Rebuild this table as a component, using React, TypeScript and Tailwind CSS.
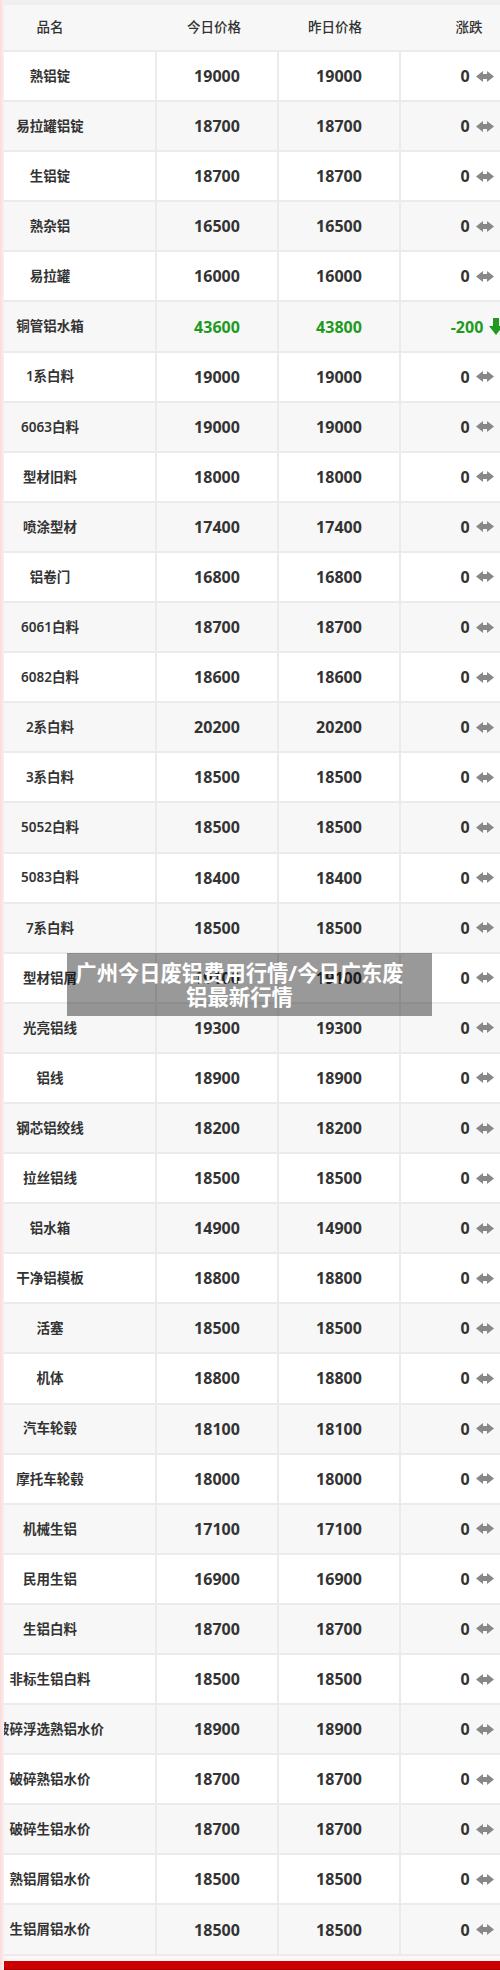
import React from "react";

type Row = { name: string; today: number; yesterday: number };

const rows: Row[] = [
  { name: "熟铝锭", today: 19000, yesterday: 19000 },
  { name: "易拉罐铝锭", today: 18700, yesterday: 18700 },
  { name: "生铝锭", today: 18700, yesterday: 18700 },
  { name: "熟杂铝", today: 16500, yesterday: 16500 },
  { name: "易拉罐", today: 16000, yesterday: 16000 },
  { name: "铜管铝水箱", today: 43600, yesterday: 43800 },
  { name: "1系白料", today: 19000, yesterday: 19000 },
  { name: "6063白料", today: 19000, yesterday: 19000 },
  { name: "型材旧料", today: 18000, yesterday: 18000 },
  { name: "喷涂型材", today: 17400, yesterday: 17400 },
  { name: "铝卷门", today: 16800, yesterday: 16800 },
  { name: "6061白料", today: 18700, yesterday: 18700 },
  { name: "6082白料", today: 18600, yesterday: 18600 },
  { name: "2系白料", today: 20200, yesterday: 20200 },
  { name: "3系白料", today: 18500, yesterday: 18500 },
  { name: "5052白料", today: 18500, yesterday: 18500 },
  { name: "5083白料", today: 18400, yesterday: 18400 },
  { name: "7系白料", today: 18500, yesterday: 18500 },
  { name: "型材铝屑", today: 19100, yesterday: 19100 },
  { name: "光亮铝线", today: 19300, yesterday: 19300 },
  { name: "铝线", today: 18900, yesterday: 18900 },
  { name: "钢芯铝绞线", today: 18200, yesterday: 18200 },
  { name: "拉丝铝线", today: 18500, yesterday: 18500 },
  { name: "铝水箱", today: 14900, yesterday: 14900 },
  { name: "干净铝模板", today: 18800, yesterday: 18800 },
  { name: "活塞", today: 18500, yesterday: 18500 },
  { name: "机体", today: 18800, yesterday: 18800 },
  { name: "汽车轮毂", today: 18100, yesterday: 18100 },
  { name: "摩托车轮毂", today: 18000, yesterday: 18000 },
  { name: "机械生铝", today: 17100, yesterday: 17100 },
  { name: "民用生铝", today: 16900, yesterday: 16900 },
  { name: "生铝白料", today: 18700, yesterday: 18700 },
  { name: "非标生铝白料", today: 18500, yesterday: 18500 },
  { name: "破碎浮选熟铝水价", today: 18900, yesterday: 18900 },
  { name: "破碎熟铝水价", today: 18700, yesterday: 18700 },
  { name: "破碎生铝水价", today: 18700, yesterday: 18700 },
  { name: "熟铝屑铝水价", today: 18500, yesterday: 18500 },
  { name: "生铝屑铝水价", today: 18500, yesterday: 18500 },
];

function FlatArrow() {
  return (
    <svg width="18" height="11" viewBox="0 0 18 11" className="shrink-0">
      <polygon points="0,5.5 7,0 7,3 11,3 11,0 18,5.5 11,11 11,8 7,8 7,11" fill="#888888" />
    </svg>
  );
}

function DownArrow() {
  return (
    <svg width="14" height="17" viewBox="0 0 14 17" className="shrink-0">
      <polygon points="4,0 10,0 10,8 14,8 7,17 0,8 4,8" fill="#1f9a1f" />
    </svg>
  );
}

const grid = "grid grid-cols-[151px_120px_120px_152px] gap-x-[2px]";

export default function App() {
  return (
    <div className="relative w-[500px] h-[1970px] overflow-hidden bg-[#fdf1f1] flex font-['Noto_Sans','Noto_Sans_CJK_SC',sans-serif] text-[#333]">
      <div className="w-[4px] shrink-0 bg-gradient-to-r from-[#f9dcdc] to-[#fdeeee]" />
      <div className="flex-1 min-w-0 flex flex-col">
        <div className="h-[5px] bg-[#efefef]" />
        <div className="w-[549px] bg-[#ebebeb] flex flex-col gap-y-[2px] pb-[2px]">
          <div className={`${grid} h-[45px] bg-[#f7f7f7] items-center text-[13.5px] font-medium`}>
            <div className="w-[92px] text-center">品名</div>
            <div className="text-center pr-[6px]">今日价格</div>
            <div className="text-center pr-[8px]">昨日价格</div>
            <div className="text-center pr-[16px]">涨跌</div>
          </div>
          {rows.map((r, i) => {
            const diff = r.today - r.yesterday;
            const bg = i % 2 === 1 ? "bg-[#f7f7f7]" : "bg-white";
            const num = diff < 0 ? "text-[#1f9a1f]" : "text-[#333]";
            return (
              <div key={r.name} className={`${grid} h-[48.1px]`}>
                <div className={`${bg} overflow-hidden flex items-center`}>
                  <div className="w-[92px] flex justify-center">
                    <span className="whitespace-nowrap text-[13.5px] font-semibold">{r.name}</span>
                  </div>
                </div>
                <div className={`${bg} flex items-center justify-center text-[16px] font-bold ${num}`}>{r.today}</div>
                <div className={`${bg} flex items-center justify-center text-[16px] font-bold ${num}`}>{r.yesterday}</div>
                <div className={`${bg} flex items-center justify-center gap-[6px] text-[16px] font-bold ${num}`}>
                  <span>{diff}</span>
                  {diff < 0 ? <DownArrow /> : <FlatArrow />}
                </div>
              </div>
            );
          })}
        </div>
        <div className="h-[5px] bg-[#fdf6f6]" />
        <div className="h-[9px] bg-[#cc0000] border-b border-[#a80000]" />
      </div>
      <div className="absolute left-[67px] top-[953px] w-[365px] h-[63px] bg-black/40 pl-[8px] pr-[28px] py-[8px] text-center text-white text-[21.3px] font-bold leading-[23.5px] whitespace-nowrap">
        广州今日废铝费用行情/今日广东废
        <br />
        铝最新行情
      </div>
    </div>
  );
}
